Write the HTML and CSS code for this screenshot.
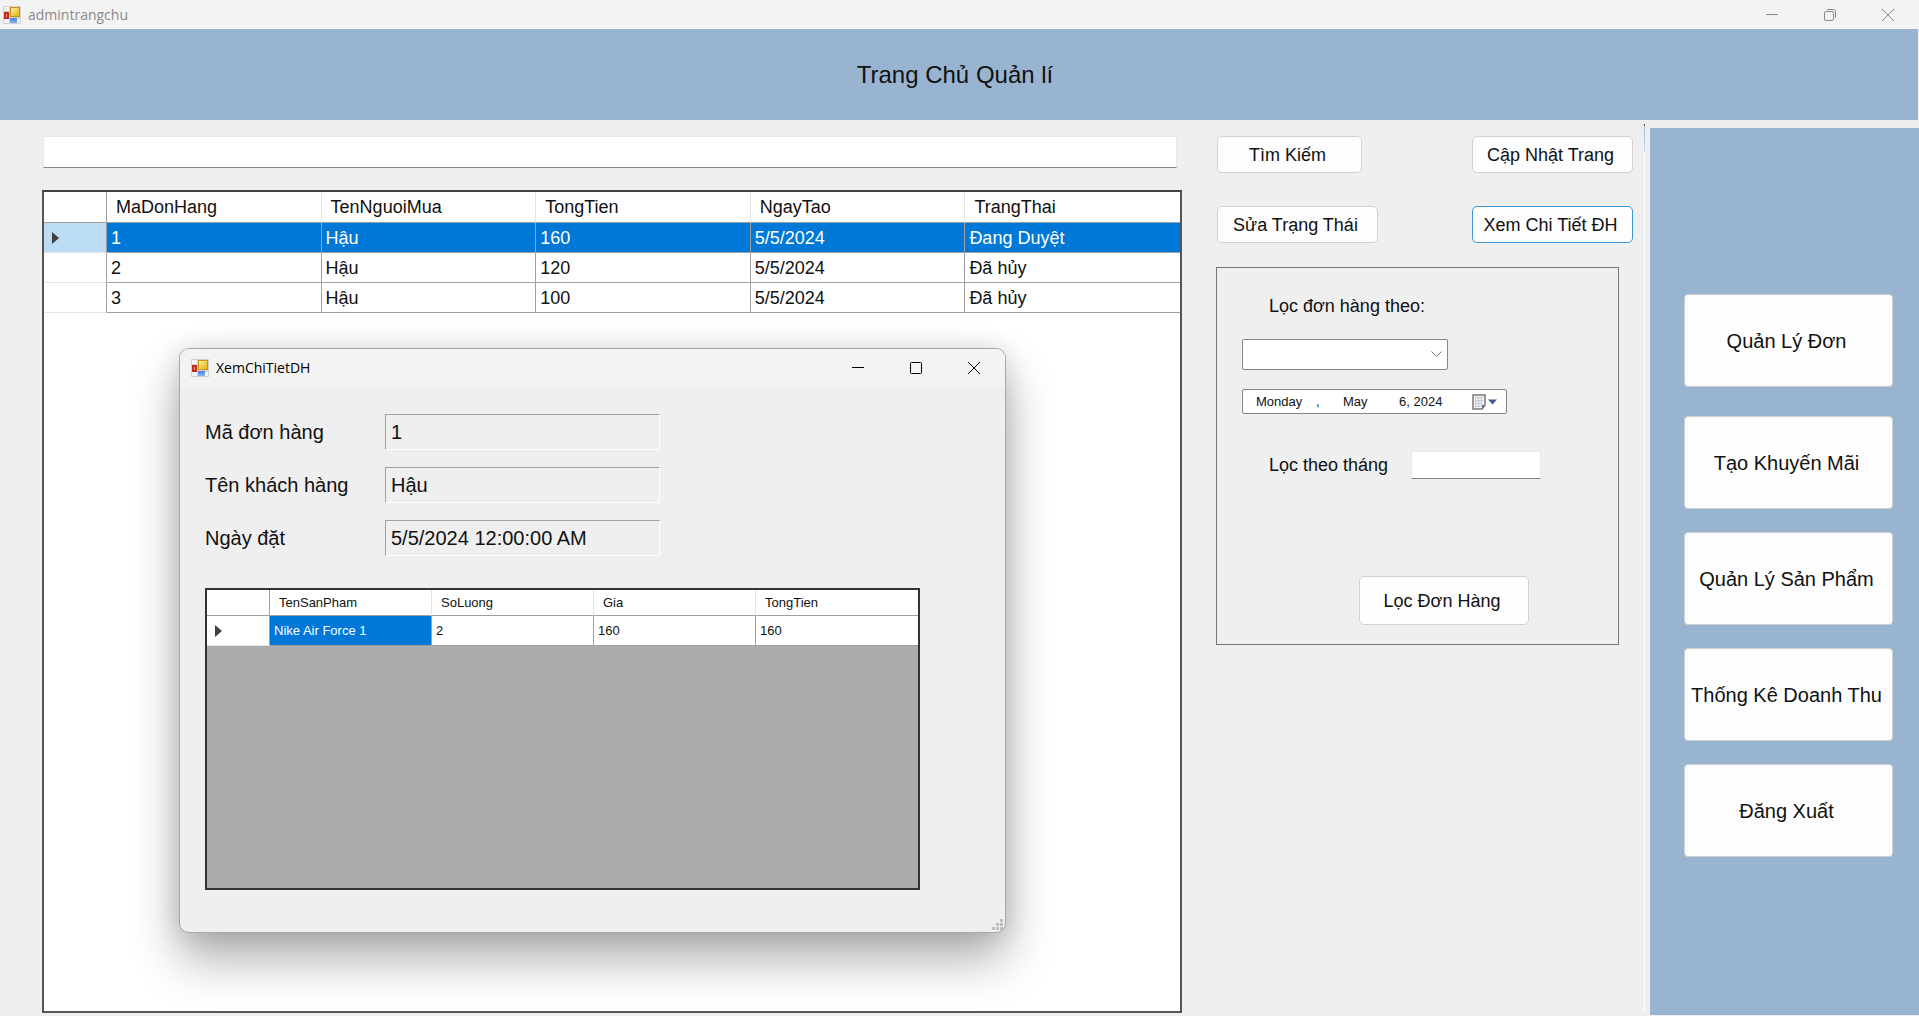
FILE: index.html
```html
<!DOCTYPE html>
<html lang="vi">
<head>
<meta charset="utf-8">
<title>admintrangchu</title>
<link rel="stylesheet" href="styles.css">
</head>
<body>
<svg class="defs" aria-hidden="true">
  <defs>
    <linearGradient id="gold" x1="0" y1="0" x2="1" y2="1"><stop offset="0" stop-color="#fff0a0"/><stop offset="1" stop-color="#e8b010"/></linearGradient>
    <linearGradient id="blue" x1="0" y1="0" x2="0" y2="1"><stop offset="0" stop-color="#4a7fdc"/><stop offset="1" stop-color="#86b4f8"/></linearGradient>
    <symbol id="app" viewBox="0 0 18 18">
      <rect width="18" height="18" fill="#d2d2d2"/>
      <rect x="1" y="1" width="5" height="4" fill="#f4f4f4"/>
      <rect x="1" y="13" width="5" height="4" fill="#f4f4f4"/>
      <rect x="14" y="13" width="3" height="4" fill="#f4f4f4"/>
      <rect x="1" y="6" width="5" height="7" fill="#c02a20"/>
      <rect x="3" y="8" width="1" height="3" fill="#f3a090"/>
      <rect x="7" y="1" width="10" height="10" fill="#c59212"/>
      <rect x="8" y="2" width="8" height="8" fill="url(#gold)"/>
      <rect x="7" y="12" width="7" height="5" fill="url(#blue)"/>
    </symbol>
  </defs>
</svg>

<header class="titlebar">
  <svg class="app-icon"><use href="#app"/></svg>
  <span class="titlebar-text">admintrangchu</span>
  <div class="controls">
    <button type="button" aria-label="Minimize"><svg viewBox="0 0 12 12"><path d="M0 5.5h12"/></svg></button>
    <button type="button" aria-label="Restore"><svg viewBox="0 0 12 12"><rect x=".5" y="2.5" width="9" height="9" rx="1.5"/><path d="M3 .5h6.500a2 2 0 0 1 2 2V9"/></svg></button>
    <button type="button" aria-label="Close"><svg viewBox="0 0 12 12"><path d="M0 0l12 12M12 0L0 12"/></svg></button>
  </div>
</header>

<div class="banner"><h1>Trang Chủ Quản lí</h1></div>

<div class="workspace">
  <main class="orders">
    <input class="search" type="text" aria-label="Tìm Kiếm">
    <div class="grid">
      <table class="orders-table">
        <colgroup><col class="marker"><col><col><col><col><col></colgroup>
        <thead><tr><td></td><th>MaDonHang</th><th>TenNguoiMua</th><th>TongTien</th><th>NgayTao</th><th>TrangThai</th></tr></thead>
        <tbody>
          <tr class="selected"><td class="rowhead"><svg class="arrow" viewBox="0 0 7 12"><path d="M0 0l7 6-7 6z"/></svg></td><td>1</td><td>Hậu</td><td>160</td><td>5/5/2024</td><td>Đang Duyệt</td></tr>
          <tr><td class="rowhead"></td><td>2</td><td>Hậu</td><td>120</td><td>5/5/2024</td><td>Đã hủy</td></tr>
          <tr><td class="rowhead"></td><td>3</td><td>Hậu</td><td>100</td><td>5/5/2024</td><td>Đã hủy</td></tr>
        </tbody>
      </table>
    </div>
  </main>

  <section class="tools">
    <div class="actions">
      <button type="button" class="btn find">Tìm Kiếm</button>
      <button type="button" class="btn wide">Cập Nhật Trang</button>
      <button type="button" class="btn wide">Sửa Trạng Thái</button>
      <button type="button" class="btn wide focused">Xem Chi Tiết ĐH</button>
    </div>
    <form class="filter">
      <label class="filter-title" for="filter-by">Lọc đơn hàng theo:</label>
      <div class="combo">
        <select id="filter-by"><option></option></select>
        <svg class="chevron" viewBox="0 0 11 7"><path d="M.5 .5l5 5 5-5"/></svg>
      </div>
      <button type="button" class="date">
        <span class="day">Monday</span><span class="comma">,</span><span class="month">May</span><span class="year">6, 2024</span>
        <svg class="calendar" viewBox="0 0 26 16">
          <path d="M1 1h12v10l-3 4H1z" fill="#f4f4f8" stroke="#7f7674" stroke-width="1.500"/>
          <path d="M13 11h-3v4z" fill="#6f6866"/>
          <path d="M3 3.500h8M3 6.500h8M3 9.500h7M3 12.500h6M3.500 3v10M6.500 3v10M9.500 3v9" stroke="#c3c8d6" fill="none"/>
          <path d="M16 5.500h9l-4.500 5z" fill="#42598f"/>
        </svg>
      </button>
      <div class="by-month"><label for="month">Lọc theo tháng</label><input id="month" type="text"></div>
      <button type="button" class="btn apply">Lọc Đơn Hàng</button>
    </form>
  </section>
  <div class="divider"></div>

  <nav class="sidebar">
    <button type="button" class="primary">Quản Lý Đơn</button>
    <button type="button">Tạo Khuyến Mãi</button>
    <button type="button">Quản Lý Sản Phẩm</button>
    <button type="button">Thống Kê Doanh Thu</button>
    <button type="button">Đăng Xuất</button>
  </nav>
</div>

<section class="dialog" role="dialog" aria-label="XemChiTietDH">
  <header class="dialog-bar">
    <svg class="app-icon"><use href="#app"/></svg>
    <span class="titlebar-text">XemChiTietDH</span>
    <div class="controls">
      <button type="button" aria-label="Minimize"><svg viewBox="0 0 12 12"><path d="M0 5.500h12"/></svg></button>
      <button type="button" aria-label="Maximize"><svg viewBox="0 0 12 12"><rect x=".5" y=".5" width="11" height="11" rx="1"/></svg></button>
      <button type="button" aria-label="Close"><svg viewBox="0 0 12 12"><path d="M0 0l12 12M12 0L0 12"/></svg></button>
    </div>
  </header>
  <div class="dialog-body">
    <div class="fields">
      <label for="ma">Mã đơn hàng</label><input id="ma" readonly value="1">
      <label for="ten">Tên khách hàng</label><input id="ten" readonly value="Hậu">
      <label for="ngay">Ngày đặt</label><input id="ngay" readonly value="5/5/2024 12:00:00 AM">
    </div>
    <div class="items">
      <table class="items-table">
        <colgroup><col class="marker"><col><col><col><col></colgroup>
        <thead><tr><td></td><th>TenSanPham</th><th>SoLuong</th><th>Gia</th><th>TongTien</th></tr></thead>
        <tbody><tr><td class="rowhead"><svg class="arrow" viewBox="0 0 7 12"><path d="M0 0l7 6-7 6z"/></svg></td><td class="current">Nike Air Force 1</td><td>2</td><td>160</td><td>160</td></tr></tbody>
      </table>
    </div>
  </div>
  <svg class="grip" viewBox="0 0 11 11"><path d="M8 0h3v3H8zM8 4h3v3H8zM4 4h3v3H4zM0 8h3v3H0zM4 8h3v3H4zM8 8h3v3H8z"/></svg>
</section>
</body>
</html>
```
FILE: styles.css
```css
* { box-sizing: border-box; }

body {
  margin: 0;
  min-height: 100vh;
  display: flex;
  flex-direction: column;
  position: relative;
  background: #efefef;
  color: #111;
  font: 18px/20px "Liberation Sans", Arial, sans-serif;
}

button, input, select { font: inherit; color: inherit; margin: 0; }
svg { display: block; }
.defs { position: absolute; width: 0; height: 0; }

/* Window title bars */
.titlebar {
  display: flex;
  align-items: center;
  height: 29px;
  padding-left: 3px;
  background: #f3f3f3;
  color: #8a8a8a;
}
.app-icon { width: 18px; height: 18px; margin-right: 7px; }
.titlebar-text { font: 14px/20px "Open Sans", "Noto Sans", sans-serif; }
.controls { display: flex; margin-left: auto; padding-right: 2px; }
.controls button {
  display: grid;
  place-items: center;
  width: 58px;
  height: 29px;
  padding: 0;
  border: 0;
  background: none;
}
.controls svg { width: 12px; height: 12px; fill: none; stroke: currentColor; }

.banner {
  display: grid;
  place-items: center;
  height: 91px;
  margin-right: 1px;
  padding-right: 8px;
  background: #99b4d1;
}
h1 { margin: 0; font-size: 24px; line-height: 28px; font-weight: 400; }

.workspace { flex: 1; display: flex; }

/* Order list */
.orders {
  flex: 1;
  display: flex;
  flex-direction: column;
  padding: 16px 34px 3px 42px;
}
.search {
  height: 32px;
  margin: 0 5px 22px 1px;
  border: 1px solid #e8e8e8;
  border-bottom: 1px solid #868686;
  background: #fff;
}
.grid { flex: 1; border: 2px solid #555; border-top-color: #444; background: #fff; }
table { width: 100%; border-collapse: separate; border-spacing: 0; table-layout: fixed; }
th, td { padding: 0 4px; border: solid #a0a0a0; border-width: 0 1px 1px 0; font-weight: 400; text-align: left; white-space: nowrap; }
th { padding-left: 9px; border-right-color: #e3e3e3; }
th:last-child, td:last-child { border-right-width: 0; }
.rowhead { border-bottom-color: #e3e3e3; }
.arrow { width: 7px; height: 12px; fill: #404040; }
.orders-table .marker { width: 63px; }
.orders-table tr { height: 30px; }
.orders-table thead tr { height: 31px; }
.selected td { background: #0078d7; color: #fff; }
.selected .rowhead { background: #bcdcf4; }
.rowhead .arrow { margin-left: 4px; }

/* Actions and filter */
.tools { width: 428px; padding: 16px 11px 0 0; }
.actions { display: flex; flex-wrap: wrap; justify-content: space-between; row-gap: 33px; padding-left: 1px; }
.btn {
  height: 37px;
  padding: 0 4px 0 0;
  border: 1px solid #d2d2d2;
  border-radius: 5px;
  background: #fdfdfd;
}
.find { width: 145px; }
.wide { width: 161px; }
.focused { border-color: #3a96dd; }
.filter {
  display: flex;
  flex-direction: column;
  align-items: flex-start;
  height: 378px;
  margin: 24px 14px 0 0;
  padding: 28px 25px 19px;
  border: 1px solid #777;
}
.filter-title { margin-left: 27px; }
.combo { display: grid; align-items: center; width: 206px; height: 31px; margin: 23px 0 19px; }
.combo select {
  grid-area: 1 / 1;
  width: 100%;
  height: 100%;
  appearance: none;
  border: 1px solid #868686;
  border-radius: 2px;
  background: #fff;
}
.chevron { grid-area: 1 / 1; justify-self: end; width: 11px; height: 7px; margin-right: 6px; fill: none; stroke: #707070; pointer-events: none; }
.date {
  display: flex;
  align-items: center;
  width: 265px;
  height: 25px;
  padding: 0 8px 0 13px;
  border: 1px solid #868686;
  border-radius: 2px;
  background: #fff;
  font-size: 13px;
  text-align: left;
}
.day { width: 60px; }
.comma { width: 27px; }
.month { width: 56px; }
.calendar { width: 26px; height: 16px; margin-left: auto; }
.by-month { display: flex; align-items: center; gap: 23px; margin: 37px 0 0 27px; }
.by-month input { width: 130px; height: 28px; border: 1px solid #e8e8e8; border-bottom-color: #868686; background: #fff; }
.apply { width: 170px; height: 49px; margin: auto 0 0 117px; }

.divider { width: 1px; margin: 4px 0 3px; background: linear-gradient(#333 1px, #99b4d1 2px, #cfdcec 28px, #fff 29px); }

/* Navigation */
.sidebar {
  display: flex;
  flex-direction: column;
  gap: 23px;
  width: 269px;
  margin: 8px 0 1px 5px;
  padding: 166px 26px 0 34px;
  background: #99b4d1;
}
.sidebar button {
  height: 93px;
  padding: 0 4px 0 0;
  border: 1px solid #cfcfcf;
  border-radius: 4px;
  background: #fdfdfd;
  font-size: 20px;
}
.sidebar .primary { margin-bottom: 6px; }

/* Detail window */
.dialog {
  position: absolute;
  left: 179px;
  top: 348px;
  width: 827px;
  border: 1px solid #a8a8a8;
  border-radius: 10px;
  background: #efefef;
  box-shadow: 0 26px 48px rgba(0, 0, 0, .32), 0 0 24px rgba(0, 0, 0, .12);
}
.dialog-bar {
  display: flex;
  align-items: center;
  height: 38px;
  padding-left: 11px;
  border-radius: 9px 9px 0 0;
  background: #f3f3f3;
  color: #000;
}
.dialog-body { padding: 27px 85px 42px 25px; }
.fields { display: grid; grid-template-columns: 180px 275px; row-gap: 17px; align-items: center; font-size: 20px; line-height: 24px; }
.fields input {
  width: 100%;
  height: 36px;
  padding: 0 5px;
  border: 1px solid #fff;
  border-top-color: #a0a0a0;
  border-left-color: #a0a0a0;
  background: #efefef;
}
.items { height: 302px; margin-top: 32px; border: 2px solid #333; background: #ababab; }
.items-table { font-size: 13px; }
.items-table td, .items-table th { background: #fff; }
.items-table .marker { width: 63px; }
.items-table thead tr { height: 26px; }
.items-table tbody tr { height: 30px; }
.items-table .current { background: #0078d7; color: #fff; }
.grip { position: absolute; right: 2px; bottom: 2px; width: 11px; height: 11px; fill: #bdbdbd; }
```
